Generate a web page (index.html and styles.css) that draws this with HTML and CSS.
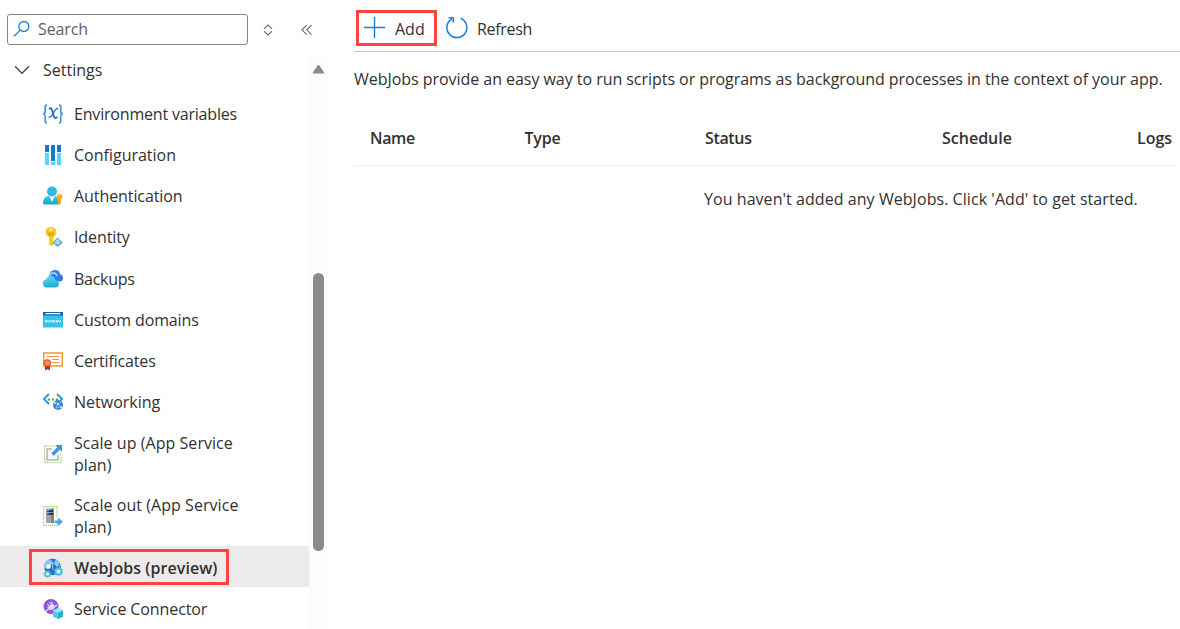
FILE: index.html
```html
<!DOCTYPE html>
<html lang="en">
<head>
<meta charset="utf-8">
<title>WebJobs</title>
<link rel="stylesheet" href="styles.css">
</head>
<body>
<div class="app">
<aside class="sidebar">
  <div class="tools">
    <div class="search">
      <svg class="search-icon" width="18" height="18" viewBox="0 0 18 18" fill="none" stroke="#1580d8" stroke-width="1.3"><circle cx="10.8" cy="6.5" r="5"/><path d="M7.2 10.1 1 16.2"/></svg>
      <span class="t-search">Search</span>
    </div>
    <svg class="sort" width="10" height="12" viewBox="0 0 10 12" fill="none" stroke="#666" stroke-width="1.1"><path d="M1 4.8 5 1l4 3.8M1 7.2 5 11l4-3.8"/></svg>
    <svg class="collapse" width="12" height="12" viewBox="0 0 12 12" fill="none" stroke="#666" stroke-width="1.1"><path d="M5.7 1.2 1 5.8l4.7 4.8M10.5 1.2 5.8 5.8l4.7 4.8"/></svg>
  </div>
  <div class="scroll-area">
    <nav class="menu">
      <div class="group"><svg width="16" height="10" viewBox="0 0 16 10" fill="none" stroke="#444" stroke-width="1.3"><path d="m1 1.3 7 7 7-7"/></svg><span class="t-settings">Settings</span></div>
      <div class="item"><svg class="icon" viewBox="0 0 20 20" fill="none" stroke="#4a94dc"><path stroke-width="1.8" d="M4 1C1.800 1 2.300 3 2.300 6S2.200 9 .7 9.800c1.500.8 1.600 1 1.600 4S1.800 19 4 19M16 1c2.200 0 1.700 2 1.700 5s.1 3 1.600 3.800c-1.500.8-1.600 1-1.600 4S18.200 19 16 19"/><path stroke="#2877cc" stroke-width="2" d="M6 4.800c2.400-1.300 3 .3 4 4.700s1.800 5.400 4.500 3.500"/><path stroke="#2877cc" stroke-width="1.300" d="M15 4.500c-2.600-.2-4 3.700-5 5.500s-2.300 4.200-4.500 3"/></svg><span class="t-env">Environment variables</span></div>
      <div class="item"><svg class="icon" viewBox="0 0 20 20"><path fill="#1478d2" d="M2 0h4v7H2zM8 0h4v16H8zM14 0h4v7h-4z"/><path fill="#55d8f5" d="M2 8h4v12H2zM8 17h4v3H8zM14 8h4v12h-4z"/></svg><span class="t-conf">Configuration</span></div>
      <div class="item"><svg class="icon" viewBox="0 0 20 20"><defs><linearGradient id="person" x2="0" y2="1"><stop stop-color="#49cbe9"/><stop offset="1" stop-color="#159fd2"/></linearGradient></defs><path fill="url(#person)" d="M0 17C0 12 3 9.500 9 9.500s8 3.500 7 9H2q-2 0-2-1.500"/><path fill="#e8f9fd" d="m6.300 10 2.600 6L12 10z"/><circle cx="9" cy="5.500" r="5" fill="#2dbbe0"/><path fill="#f5ad19" d="M16.500 7.500a3.300 3.300 0 0 1 1.500 6v3.800L16.500 19 15 17.400v-3.900a3.300 3.300 0 0 1 1.500-6"/><circle cx="16.500" cy="9.400" r=".8" fill="#fff1b2"/></svg><span class="t-auth">Authentication</span></div>
      <div class="item identity"><svg class="icon" viewBox="0 0 20 20"><path fill="#fac922" d="M8 0c3.500 0 5.500 2.500 5.500 5S12 9 10.500 10v7L8.300 19.500 6 17v-1.800l1-1-1-1V10C4 9 2.500 7.500 2.500 5S4.500 0 8 0"/><circle cx="8" cy="2.700" r="1.300" fill="#fff6cd"/><path stroke="#d6950e" d="M5 6h6M5 7.800h6"/><path fill="#5fa9cb" d="m14.500 10.500 5.300 5.300-5.300 4.200-5-4.200z"/><path stroke="#e5f5f8" fill="none" stroke-width=".8" d="m14.500 12.500-2.500 3.500h5zM14.500 12.500v5"/></svg><span class="t-ident">Identity</span></div>
      <div class="item"><svg class="icon" viewBox="0 0 20 20"><defs><linearGradient id="cloud" x2="0" y2="1"><stop stop-color="#58dcef"/><stop offset="1" stop-color="#22a8d7"/></linearGradient></defs><path fill="#2f7fdf" d="M6 7q1-6 6-6 4.500 0 5 4.300 3 .8 3 3.700 0 3.500-3.500 3.500H8Q4 11 6 7"/><path stroke="#a9d3fb" stroke-width="1.600" fill="none" d="M7 6.500Q9 2.500 12.500 4.500L14.500 7"/><path fill="url(#cloud)" d="M0 14q0-3 3.200-3.500Q4 7 7.500 7q4 0 5 4 3.500.5 3.500 3.800 0 3.700-4 3.700H4Q0 18.500 0 14"/></svg><span class="t-back">Backups</span></div>
      <div class="item"><svg class="icon" viewBox="0 0 20 20"><path fill="#35c2ee" d="M0 2h20v15.500H0z"/><path fill="#15639c" d="M0 2h20v3.500H0z"/><path fill="#e8f6ff" d="M2.500 3h15v1.300h-15z"/><path stroke="#d9faff" stroke-width="1" fill="none" d="m2 10 1 2.500L4.300 10l1.300 2.500 1-2.500m1 0 1 2.500L9.800 10l1.300 2.500 1-2.500m1 0 1 2.500 1.200-2.500 1.300 2.500 1-2.500"/></svg><span class="t-dom">Custom domains</span></div>
      <div class="item"><svg class="icon" viewBox="0 0 20 20"><path fill="#fffaf4" stroke="#f19b26" stroke-width="1.400" d="M.7 2h18.600v13H.7z"/><path stroke="#e09562" d="M4 5.500h12M9 8.500h7M9 11.500h7"/><path fill="#b72f31" d="M2 12h5v7.500l-2.400-1.300L2 19.500z"/><circle cx="4.300" cy="12" r="3.100" fill="#ff9442" stroke="#e45129" stroke-width="1.200"/></svg><span class="t-cert">Certificates</span></div>
      <div class="item"><svg class="icon" viewBox="0 0 20 20"><path fill="none" stroke="#319de1" stroke-width="2" d="M6 2 1 7l5 5M14 2l5 5-2 2"/><g fill="#6fa832"><circle cx="6" cy="7.500" r="1.200"/><circle cx="10" cy="7.500" r="1.200"/><circle cx="14" cy="7.500" r="1.200"/></g><circle cx="15" cy="13" r="5" fill="#3d86d0"/><path stroke="#9fcdf0" stroke-width=".8" fill="none" d="m12 11 3 1 3-2m-3 2-2 4 5-1m-3-3 3 3"/><g fill="#c7e5f8"><circle cx="12" cy="11" r="1"/><circle cx="15" cy="12" r="1.200"/><circle cx="18" cy="15" r="1"/></g></svg><span class="t-net">Networking</span></div>
      <div class="item double"><svg class="icon" viewBox="0 0 20 20"><path fill="none" stroke="#9bd05c" stroke-width="1.200" stroke-dasharray="1.300 .8" d="M12 2H1.500v16.500H18V9"/><path fill="#f7f7f7" stroke="#b4b4b4" stroke-width="1.500" d="M9 5H4v11h11v-5"/><path fill="#3699e5" d="M12 1h7v7l-2.200-2.200-6 6-2.500-2.500 6-6z"/></svg><span class="t-up">Scale up (App Service<br>plan)</span></div>
      <div class="item double scale-out"><svg class="icon" viewBox="0 0 20 20"><path fill="none" stroke="#9bd05c" stroke-width="1.200" stroke-dasharray="1.300 .8" d="M14 11V.7H.7v18.600H14V17"/><path fill="#a5a5a5" d="M3 2.500h8V17H3z"/><path fill="#858585" d="M8 2.500h3V17H8z"/><path fill="#173f68" d="M4 4h6v2H4zM4 7h6v2H4z"/><path fill="#4cb3ff" d="M4 4h2v1H4zM4 7h2v1H4z"/><path fill="#45a9e9" d="M11.500 14.500H15v-3l5 4.300-5 4.200v-3h-3.500z"/></svg><span class="t-out">Scale out (App Service<br>plan)</span></div>
      <div class="item selected"><svg class="icon" viewBox="0 0 20 20"><circle cx="9.500" cy="9" r="8.300" fill="#2371c9"/><path fill="#85c8f0" d="m2 5 5-4 3 3-5 7-4-1zM13 1l4 4-3 4-3-4z"/><path stroke="#b9e0f8" stroke-width=".8" fill="none" d="m3 9 6-4 8 3m-8-3 1 7"/><circle cx="5.500" cy="8.500" r="2.200" fill="#f5fbff"/><circle cx="15.500" cy="13.500" r="3" fill="#fff" stroke="#4bbce3" stroke-width="2"/><circle cx="15.500" cy="13.500" r="4.200" fill="none" stroke="#4bbce3" stroke-dasharray="1.300 2"/><circle cx="4.500" cy="16" r="2.400" fill="#fff" stroke="#4bbce3" stroke-width="1.600"/><circle cx="4.500" cy="16" r="3.400" fill="none" stroke="#4bbce3" stroke-dasharray="1 1.600"/></svg><span class="t-web">WebJobs (preview)</span><i class="callout"></i></div>
      <div class="item last"><svg class="icon" viewBox="0 0 20 20"><circle cx="8" cy="7.500" r="7.500" fill="#8d55dd"/><path fill="#e6dafb" d="m4.300 8.300 5.200-4.200 2.900 3.600-2 2.500-3 1-2-.9z"/><path stroke="#eee3ff" stroke-width="1.100" d="M5.800 6.500 4.500 4.800m3.300 0L6.500 3M9.500 4.500 8.500 2.800m3.600 4.700 1.900-1.500M5.500 10 2.500 12.500"/><path fill="#53cbea" d="m15 9 5 2.500v6L15 20l-5-2.500v-6z"/><path fill="#9ae6f5" d="m10 11.500 5-2.500 5 2.500-5 2.500z"/><path fill="#2caecf" d="m15 14 5-2.500v6L15 20z"/></svg><span class="t-serv">Service Connector</span></div>
    </nav>
    <div class="scrollbar"><svg width="13" height="10" viewBox="0 0 13 10"><path d="M6.500 1 12 9H1z" fill="#8b8b8b" stroke="#8b8b8b" stroke-linejoin="round"/></svg><div class="thumb"></div></div>
  </div>
</aside>
<main class="content">
  <div class="toolbar">
    <div class="add"><svg width="21" height="21" viewBox="0 0 21 21" stroke="#1580d8" stroke-width="1.4"><path d="M10.500 0v21M0 10.500h21"/></svg><span class="t-add">Add</span></div>
    <div class="refresh"><svg width="23" height="23" viewBox="0 0 23 23" fill="none" stroke="#1580d8" stroke-width="1.500"><path d="M15.500 2.300A10 10 0 1 1 6.800 3M3.500 1.700h4.700v4.700"/></svg><span class="t-ref">Refresh</span></div>
  </div>
  <p class="intro"><span class="t-intro">WebJobs provide an easy way to run scripts or programs as background processes in the context of your app.</span></p>
  <div class="thead"><span class="t-name">Name</span><span class="t-type">Type</span><span class="t-status">Status</span><span class="t-sched">Schedule</span><span class="t-logs">Logs</span></div>
  <p class="empty"><span class="t-empty">You haven't added any WebJobs. Click 'Add' to get started.</span></p>
</main>
</div>
</body>
</html>
```
FILE: styles.css
```css
* { box-sizing: border-box; }
body { margin: 0; background: #fff; color: #323130; font: 16px/22px "Open Sans", "Noto Sans", sans-serif; overflow: hidden; }
svg { display: block; flex: none; }
p { margin: 0; }
span { white-space: nowrap; }
.app { display: flex; width: 1180px; height: 629px; }
.sidebar { width: 328px; flex: none; display: flex; flex-direction: column; }
.tools { height: 54px; flex: none; display: flex; align-items: center; padding: 5px 0 0 7px; }
.search { width: 241px; height: 31px; border: 1px solid #858380; border-radius: 3px; display: flex; align-items: center; padding: 0 0 2px 5px; gap: 7px; color: #605e5c; }
.sort { margin-left: 15px; }
.collapse { margin-left: 28px; }
.scroll-area { display: flex; height: 575px; overflow: hidden; }
.menu { width: 309px; flex: none; }
.group { height: 39.4px; display: flex; align-items: center; padding: 0 0 7px 14px; gap: 13px; }
.item { height: 41.2px; display: flex; align-items: center; padding-left: 43px; gap: 11px; position: relative; }
.icon { width: 20px; height: 20px; }
.identity { padding-bottom: 1px; }
.double { height: 61.6px; }
.scale-out { padding-top: 1px; }
.selected { background: #edebe9; font-weight: 600; }
.selected, .last { padding-top: 2px; }
.callout { position: absolute; left: 29px; top: 3px; width: 200px; height: 36px; border: 3px solid #fc4243; }
.scrollbar { width: 19px; background: #fcfcfc; padding: 10px 0 0 3px; }
.thumb { width: 11px; height: 278px; border-radius: 6px; background: #8b8b8b; margin: 199px 0 0 1px; }
.content { margin-left: 26px; width: 826px; display: flex; flex-direction: column; }
.toolbar { height: 52px; border-bottom: 1px solid #c8c8c8; display: flex; align-items: flex-start; padding: 10px 0 0 2px; }
.add { width: 81px; height: 36px; border: 3px solid #fc4243; display: flex; align-items: center; padding-left: 5px; gap: 10px; }
.add svg, .refresh svg { margin-top: -2px; }
.t-add, .t-ref { margin-top: 2px; }
.refresh { height: 36px; display: flex; align-items: center; margin-left: 8px; gap: 9px; }
.intro { height: 59px; padding-top: 16px; }
.thead { width: 822px; height: 55px; border-bottom: 1px solid #ececec; display: grid; grid-template-columns: 154.500px 180.500px 237px 195px 40px; align-items: center; padding-left: 16px; font-weight: 600; }
.empty { padding: 22px 0 0 350px; }
/* Per-label tracking */
.t-search { letter-spacing: -.1px; }
.t-env { letter-spacing: -.19px; }
.t-auth { letter-spacing: -.08px; }
.t-ident { letter-spacing: -.1px; }
.t-back { letter-spacing: -.28px; }
.t-dom { letter-spacing: -.12px; }
.t-cert { letter-spacing: -.17px; }
.t-up, .t-out { letter-spacing: .05px; }
.t-web { letter-spacing: .07px; }
.t-serv { letter-spacing: -.1px; }
.t-ref { letter-spacing: -.3px; }
.t-intro { letter-spacing: -.042px; }
.t-name, .t-status { letter-spacing: -.35px; }
.t-type { letter-spacing: -.2px; }
.t-empty { letter-spacing: .055px; }
```
